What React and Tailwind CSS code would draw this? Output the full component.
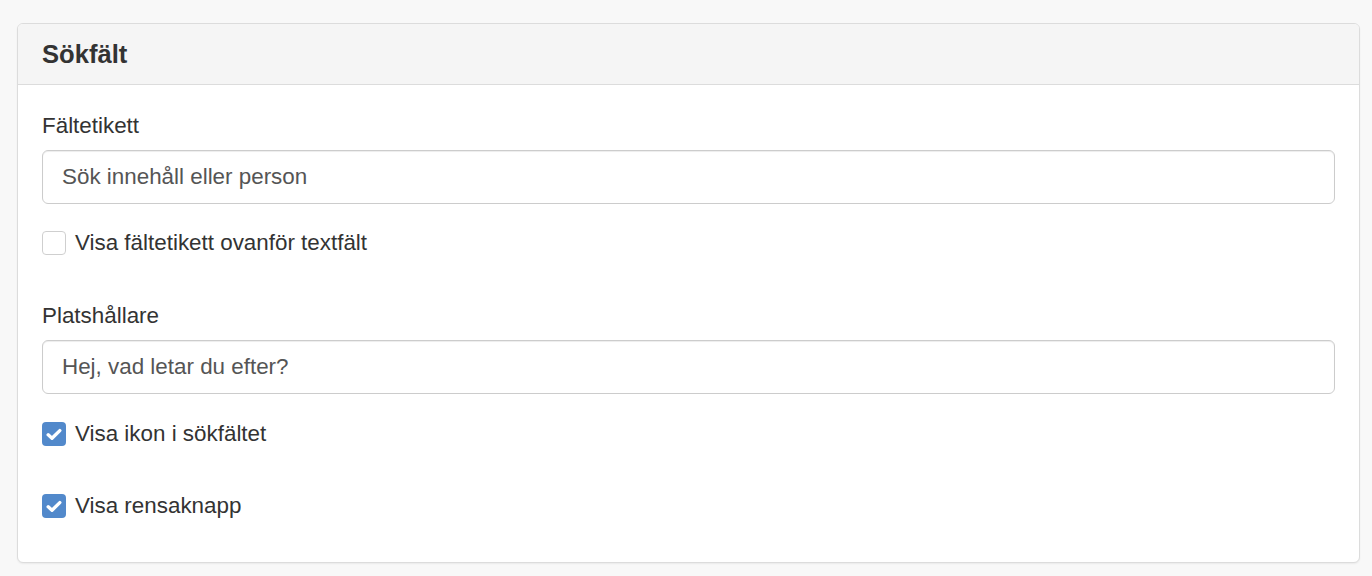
import React from "react";

function Checkbox({ checked, label }) {
    return (
        <label className="flex items-center h-[32px] gap-[9px] text-[22.4px] text-[#333]">
            {checked ? (
                <span className="w-[24px] h-[24px] rounded-[4px] bg-[#5289cb] flex items-center justify-center">
                    <svg width="16" height="13" viewBox="0 0 16 13">
                        <path d="M2.2 6.8 L6 10.2 L13.8 2.6" fill="none" stroke="white" strokeWidth="3.4" strokeLinecap="round" strokeLinejoin="round" />
                    </svg>
                </span>
            ) : (
                <span className="w-[24px] h-[24px] rounded-[4px] bg-white border border-[#cfcfcf]" />
            )}
            <span>{label}</span>
        </label>
    );
}

function Field({ label, value }) {
    return (
        <div>
            <div className="h-[32px] leading-[32px] text-[22.4px] text-[#333]">{label}</div>
            <div className="mt-[8px] h-[54px] border border-[#ccc] rounded-[6px] bg-white px-[19px] flex items-center text-[22.4px] text-[#555] shadow-[inset_0_1px_1px_rgba(0,0,0,0.075)]">
                {value}
            </div>
        </div>
    );
}

export default function App() {
    return (
        <div className="min-h-screen bg-[#f8f8f8] pt-[23px] pl-[17px] pr-[12px] font-['Liberation_Sans',Arial,sans-serif]">
            <div className="bg-white border border-[#dcdcdc] rounded-[6px] shadow-[0_1px_2px_rgba(0,0,0,0.06)] overflow-hidden">
                {/* Header */}
                <div className="bg-[#f5f5f5] border-b border-[#dcdcdc] h-[61px] px-[24px] flex items-center">
                    <h3 className="text-[25.6px] font-bold text-[#333]">Sökfält</h3>
                </div>

                {/* Body */}
                <div className="px-[24px] pt-[25px] pb-[40px]">
                    <Field label="Fältetikett" value="Sök innehåll eller person" />
                    <div className="mt-[23px]">
                        <Checkbox checked={false} label="Visa fältetikett ovanför textfält" />
                    </div>

                    <div className="mt-[41px]">
                        <Field label="Platshållare" value="Hej, vad letar du efter?" />
                    </div>
                    <div className="mt-[24px]">
                        <Checkbox checked={true} label="Visa ikon i sökfältet" />
                    </div>
                    <div className="mt-[40px]">
                        <Checkbox checked={true} label="Visa rensaknapp" />
                    </div>
                </div>
            </div>
        </div>
    );
}
